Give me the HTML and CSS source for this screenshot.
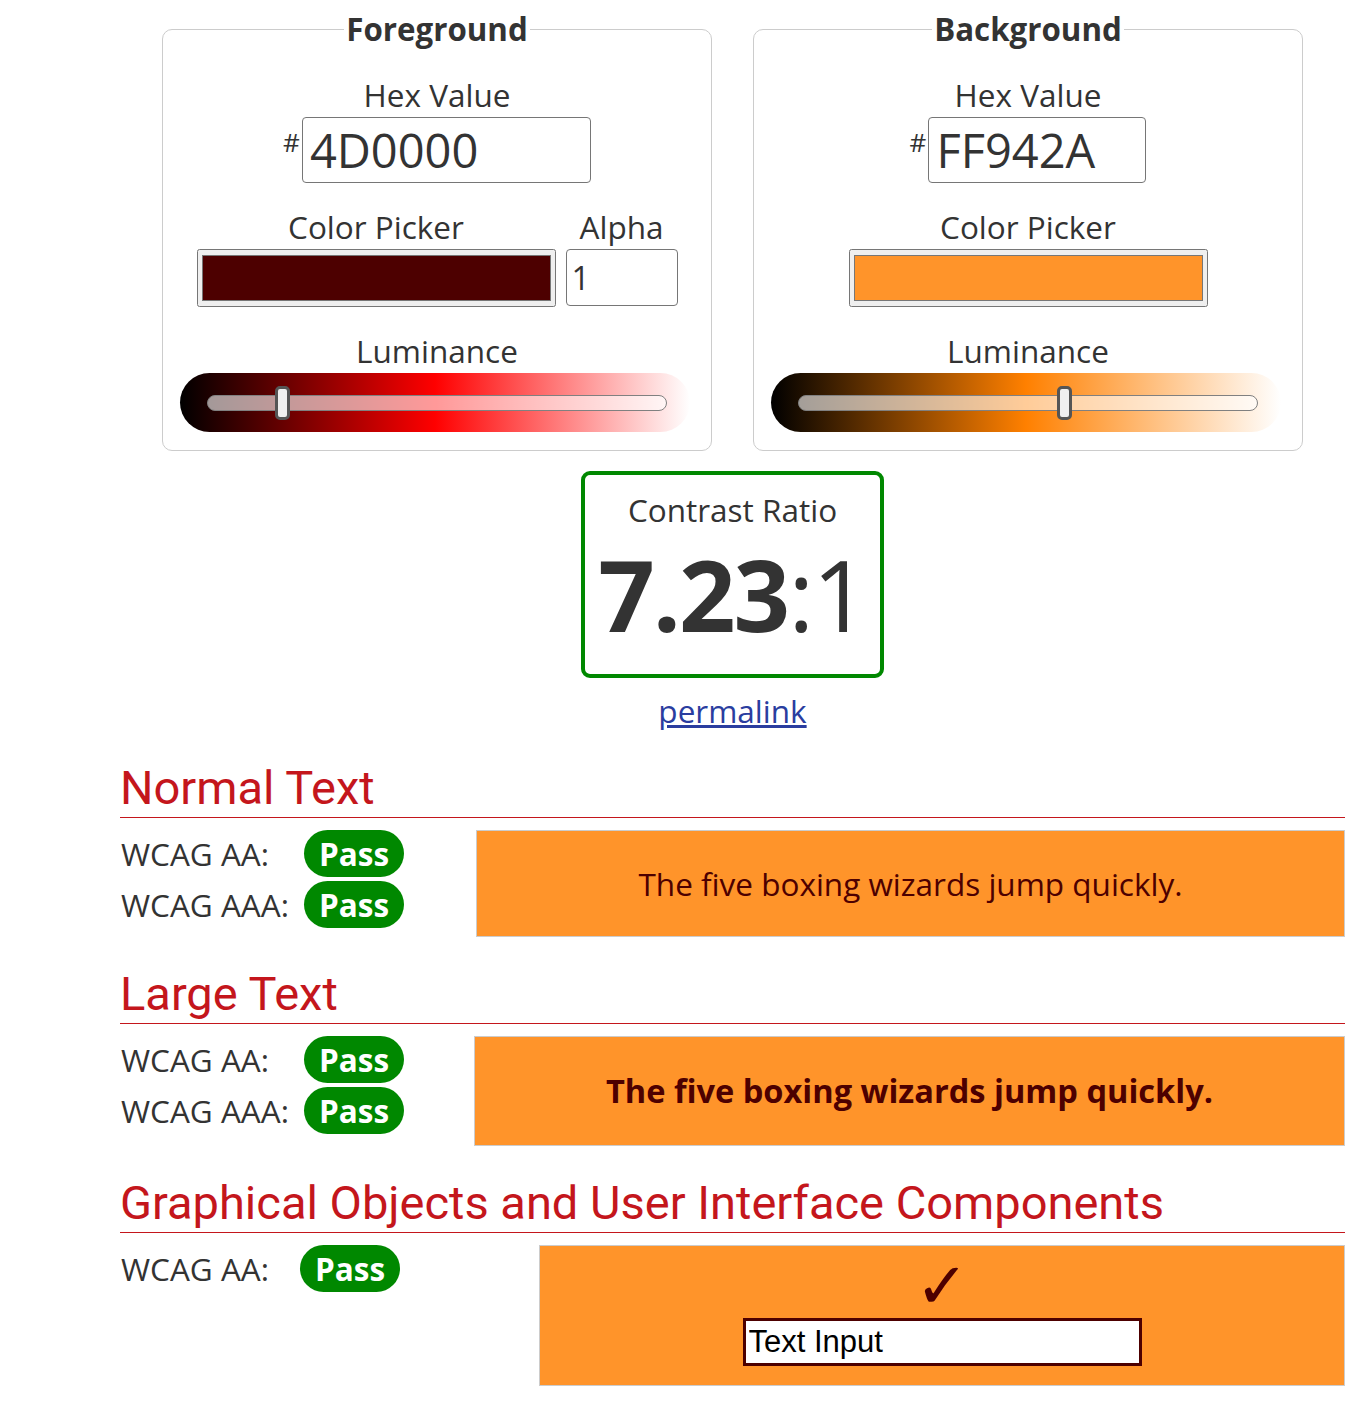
FILE: index.html
```html
<!DOCTYPE html>
<html lang="en">
<head>
<meta charset="utf-8">
<title>Contrast Checker</title>
<link rel="stylesheet" href="styles.css">
</head>
<body>
<main class="page">
  <div class="pickers">
    <fieldset class="panel">
      <legend>Foreground</legend>
      <label class="label" for="fg-hex">Hex Value</label>
      <div class="hexrow"><span class="hash">#</span><input id="fg-hex" class="hex hex-fg" type="text" value="4D0000"></div>
      <div class="pickrow">
        <div class="col">
          <label class="label" for="fg-picker">Color Picker</label>
          <input id="fg-picker" class="picker" type="color" value="#4d0000">
        </div>
        <div class="col">
          <label class="label" for="fg-alpha">Alpha</label>
          <input id="fg-alpha" class="alpha" type="text" value="1">
        </div>
      </div>
      <label class="label" for="fg-lum">Luminance</label>
      <div class="lum lum-fg"><input id="fg-lum" class="range" type="range" min="0" max="100" step="0.1" value="15.1"></div>
    </fieldset>
    <fieldset class="panel">
      <legend>Background</legend>
      <label class="label" for="bg-hex">Hex Value</label>
      <div class="hexrow"><span class="hash">#</span><input id="bg-hex" class="hex hex-bg" type="text" value="FF942A"></div>
      <div class="pickrow">
        <div class="col">
          <label class="label" for="bg-picker">Color Picker</label>
          <input id="bg-picker" class="picker" type="color" value="#ff942a">
        </div>
      </div>
      <label class="label" for="bg-lum">Luminance</label>
      <div class="lum lum-bg"><input id="bg-lum" class="range" type="range" min="0" max="100" step="0.1" value="58.2"></div>
    </fieldset>
  </div>

  <div class="ratio">
    <div class="ratio-label">Contrast Ratio</div>
    <div class="ratio-value"><b>7.23</b>:1</div>
  </div>
  <a class="permalink" href="#">permalink</a>

  <section class="result result-normal">
    <h2>Normal Text</h2>
    <div class="result-body">
      <div class="checks">
        <div class="check"><span class="check-label">WCAG AA:</span><span class="pass">Pass</span></div>
        <div class="check"><span class="check-label">WCAG AAA:</span><span class="pass">Pass</span></div>
      </div>
      <div class="sample">The five boxing wizards jump quickly.</div>
    </div>
  </section>

  <section class="result result-large">
    <h2>Large Text</h2>
    <div class="result-body">
      <div class="checks">
        <div class="check"><span class="check-label">WCAG AA:</span><span class="pass">Pass</span></div>
        <div class="check"><span class="check-label">WCAG AAA:</span><span class="pass">Pass</span></div>
      </div>
      <div class="sample sample-large">The five boxing wizards jump quickly.</div>
    </div>
  </section>

  <section class="result result-graphic">
    <h2>Graphical Objects and User Interface Components</h2>
    <div class="result-body">
      <div class="checks">
        <div class="check"><span class="check-label">WCAG AA:</span><span class="pass">Pass</span></div>
      </div>
      <div class="sample sample-graphic">
        <span class="checkmark">&#10003;</span>
        <input class="text-input" type="text" value="Text Input" aria-label="Text Input">
      </div>
    </div>
  </section>
</main>
</body>
</html>
```

FILE: styles.css
```css
* {
  box-sizing: border-box;
}

body {
  margin: 0;
  background: #fff;
  color: #333;
  font-family: "Open Sans", "DejaVu Sans", sans-serif;
  font-size: 31.5px;
}

.page {
  padding: 0 27px 0 120px;
}

/* ---------- colour pickers ---------- */
.pickers {
  display: flex;
  justify-content: center;
  gap: 41px;
  margin-top: 10px;
}

.panel {
  width: 550px;
  min-width: 0;
  margin: 0;
  padding: 28px 0 18px;
  border: 1px solid #ccc;
  border-radius: 10px;
  display: flex;
  flex-direction: column;
  align-items: center;
}

.panel legend {
  margin: 0 auto;
  padding: 0 2px;
  font-size: 31.3px;
  font-weight: 700;
  line-height: 38px;
}

.label {
  display: block;
  margin-bottom: 3px;
  line-height: 38px;
  text-align: center;
}

.hexrow {
  display: flex;
  align-items: flex-start;
  margin-bottom: 25px;
}

.hash {
  margin-top: 12px;
  margin-right: 2px;
  font-size: 26px;
  line-height: 26px;
}

.hex {
  height: 66px;
  margin: 0;
  padding: 0 7px;
  border: 1px solid #767676;
  border-radius: 4px;
  background: #fff;
  color: #333;
  font-family: "Open Sans", sans-serif;
  font-size: 47px;
}

.hex-fg {
  width: 289px;
}

.hex-bg {
  width: 218px;
}

.pickrow {
  display: flex;
  gap: 10px;
  margin-bottom: 25px;
}

.col {
  display: flex;
  flex-direction: column;
  align-items: center;
}

.picker {
  width: 359px;
  height: 58px;
  margin: 0;
}

.alpha {
  width: 112px;
  height: 57px;
  margin: 0;
  padding: 0 5px;
  border: 1px solid #767676;
  border-radius: 4px;
  background: #fff;
  color: #333;
  font-family: "Open Sans", sans-serif;
  font-size: 32px;
}

.lum {
  align-self: flex-start;
  width: 510px;
  height: 59px;
  margin-left: 17px;
  padding-left: 27px;
  border-radius: 30px;
  display: flex;
  align-items: center;
}

.lum-fg {
  background: linear-gradient(to right, #000, #f00, #fff);
}

.lum-bg {
  background: linear-gradient(to right, #000, #ff8000, #fff);
}

.range {
  -webkit-appearance: none;
  appearance: none;
  width: 460px;
  height: 34px;
  margin: 0;
  background: transparent;
}

.range::-webkit-slider-runnable-track {
  box-sizing: border-box;
  height: 16px;
  border: 1px solid #808080;
  border-radius: 8px;
  background: rgba(255, 255, 255, 0.6);
}

.range::-webkit-slider-thumb {
  -webkit-appearance: none;
  appearance: none;
  box-sizing: border-box;
  width: 15px;
  height: 34px;
  margin-top: -10px;
  border: 3px solid #555;
  border-radius: 5px;
  background: #efefef;
}

/* ---------- ratio ---------- */
.ratio {
  width: 303px;
  margin: 20px auto 0;
  padding: 16px 0 20px;
  border: 4px solid #008800;
  border-radius: 9px;
  text-align: center;
}

.ratio-label {
  line-height: 38px;
}

.ratio-value {
  margin-top: 5px;
  font-size: 99px;
  line-height: 120px;
  letter-spacing: -2px;
  white-space: nowrap;
}

.ratio-value b {
  font-weight: 700;
}

.permalink {
  display: block;
  width: max-content;
  margin: 14px auto 0;
  line-height: 38px;
  color: #2a3d9f;
  text-decoration: underline;
}

/* ---------- results ---------- */
.result h2 {
  margin: 30px 0 0;
  padding-bottom: 2px;
  border-bottom: 1px solid #c4161c;
  color: #c4161c;
  font-family: Roboto, "Liberation Sans", sans-serif;
  font-size: 47px;
  font-weight: 400;
  line-height: 54px;
}

.result-normal h2 {
  margin-top: 31px;
}

.result-body {
  display: grid;
  align-items: start;
  margin-top: 12px;
}

.result-normal .result-body {
  grid-template-columns: 356px 1fr;
}

.result-large .result-body {
  grid-template-columns: 354px 1fr;
}

.result-graphic .result-body {
  grid-template-columns: 419px 1fr;
}

.checks {
  display: flex;
  flex-direction: column;
  gap: 4px;
}

.check {
  display: flex;
  align-items: center;
  height: 47px;
}

.check-label {
  width: 184px;
  padding-left: 1px;
}

.result-graphic .check-label {
  width: 180px;
}

.pass {
  width: 100px;
  height: 47px;
  border-radius: 24px;
  background: #008800;
  color: #fff;
  font-weight: 700;
  display: flex;
  align-items: center;
  justify-content: center;
}

.sample {
  padding: 34px 0 33px;
  border: 1px solid #ccc;
  background: #ff942a;
  color: #4d0000;
  line-height: 38px;
  text-align: center;
}

.sample-large {
  padding: 35px 0;
  font-size: 32.6px;
  font-weight: 700;
}

.sample-graphic {
  display: flex;
  flex-direction: column;
  align-items: center;
  padding: 12px 0 19px;
}

.checkmark {
  font-family: "DejaVu Sans", sans-serif;
  font-size: 64px;
  line-height: 56px;
  color: #4d0000;
}

.text-input {
  width: 399px;
  height: 48px;
  margin: 4px 0 0;
  padding: 0 3px;
  border: 3px solid #4d0000;
  border-radius: 0;
  background: #fff;
  color: #000;
  font-family: "Liberation Sans", Arial, sans-serif;
  font-size: 31px;
}
```
